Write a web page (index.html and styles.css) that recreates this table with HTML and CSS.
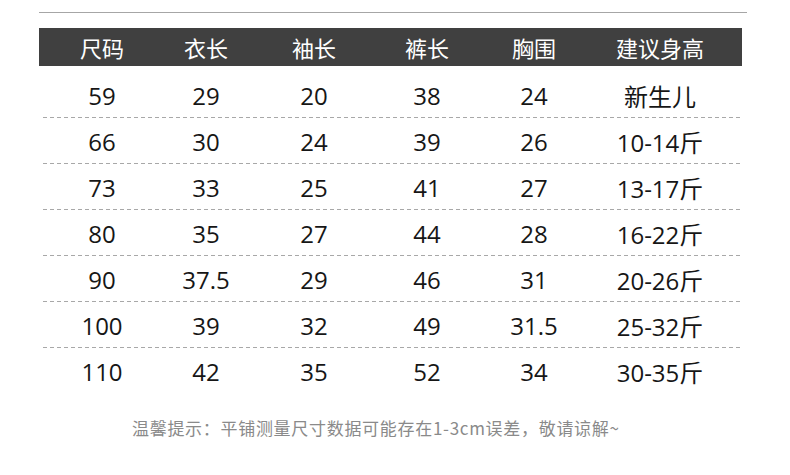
FILE: index.html
```html
<!DOCTYPE html>
<html lang="zh-CN">
<head>
<meta charset="utf-8">
<link rel="stylesheet" href="styles.css">
</head>
<body>
<div class="page">
  <div class="topline"></div>
  <div class="table">
    <div class="row head">
      <div>尺码</div><div>衣长</div><div>袖长</div><div>裤长</div><div>胸围</div><div>建议身高</div>
    </div>
    <div class="row data"><div>59</div><div>29</div><div>20</div><div>38</div><div>24</div><div>新生儿</div></div>
    <div class="row data"><div>66</div><div>30</div><div>24</div><div>39</div><div>26</div><div>10-14斤</div></div>
    <div class="row data"><div>73</div><div>33</div><div>25</div><div>41</div><div>27</div><div>13-17斤</div></div>
    <div class="row data"><div>80</div><div>35</div><div>27</div><div>44</div><div>28</div><div>16-22斤</div></div>
    <div class="row data"><div>90</div><div>37.5</div><div>29</div><div>46</div><div>31</div><div>20-26斤</div></div>
    <div class="row data"><div>100</div><div>39</div><div>32</div><div>49</div><div>31.5</div><div>25-32斤</div></div>
    <div class="row data last"><div>110</div><div>42</div><div>35</div><div>52</div><div>34</div><div>30-35斤</div></div>
  </div>
  <p class="note">温馨提示：平铺测量尺寸数据可能存在1-3cm误差，敬请谅解~</p>
</div>
</body>
</html>
```

FILE: styles.css
```css
html, body {
  margin: 0;
  padding: 0;
  background: #ffffff;
}
body {
  font-family: "Noto Sans CJK SC", "Noto Sans", sans-serif;
  width: 790px;
  height: 475px;
  overflow: hidden;
}
.page {
  padding: 12px 0 0 39px;
}
.topline {
  width: 708px;
  height: 1px;
  background: #a6a6a6;
}
.table {
  width: 703px;
  margin-top: 15px;
}
.row {
  display: grid;
  grid-template-columns: 126px 82px 134px 92px 122px 130px;
  align-items: center;
  justify-items: center;
}
.head {
  height: 38px;
  background: #404040;
  color: #ffffff;
  font-size: 22px;
  margin-bottom: 6px;
}
.data {
  position: relative;
  height: 46px;
  font-family: "Open Sans", "Noto Sans CJK SC", sans-serif;
  font-size: 24px;
  color: #161616;
}
.data::after {
  content: "";
  position: absolute;
  left: 4px;
  bottom: 0;
  width: 700px;
  height: 1px;
  background: repeating-linear-gradient(to right, #a8a8a8 0 4px, transparent 4px 7px);
}
.data.last::after {
  display: none;
}
.note {
  margin: 22px 0 0 93px;
  font-size: 17px;
  line-height: 24px;
  letter-spacing: 0.7px;
  color: #8a8a8a;
}
```
